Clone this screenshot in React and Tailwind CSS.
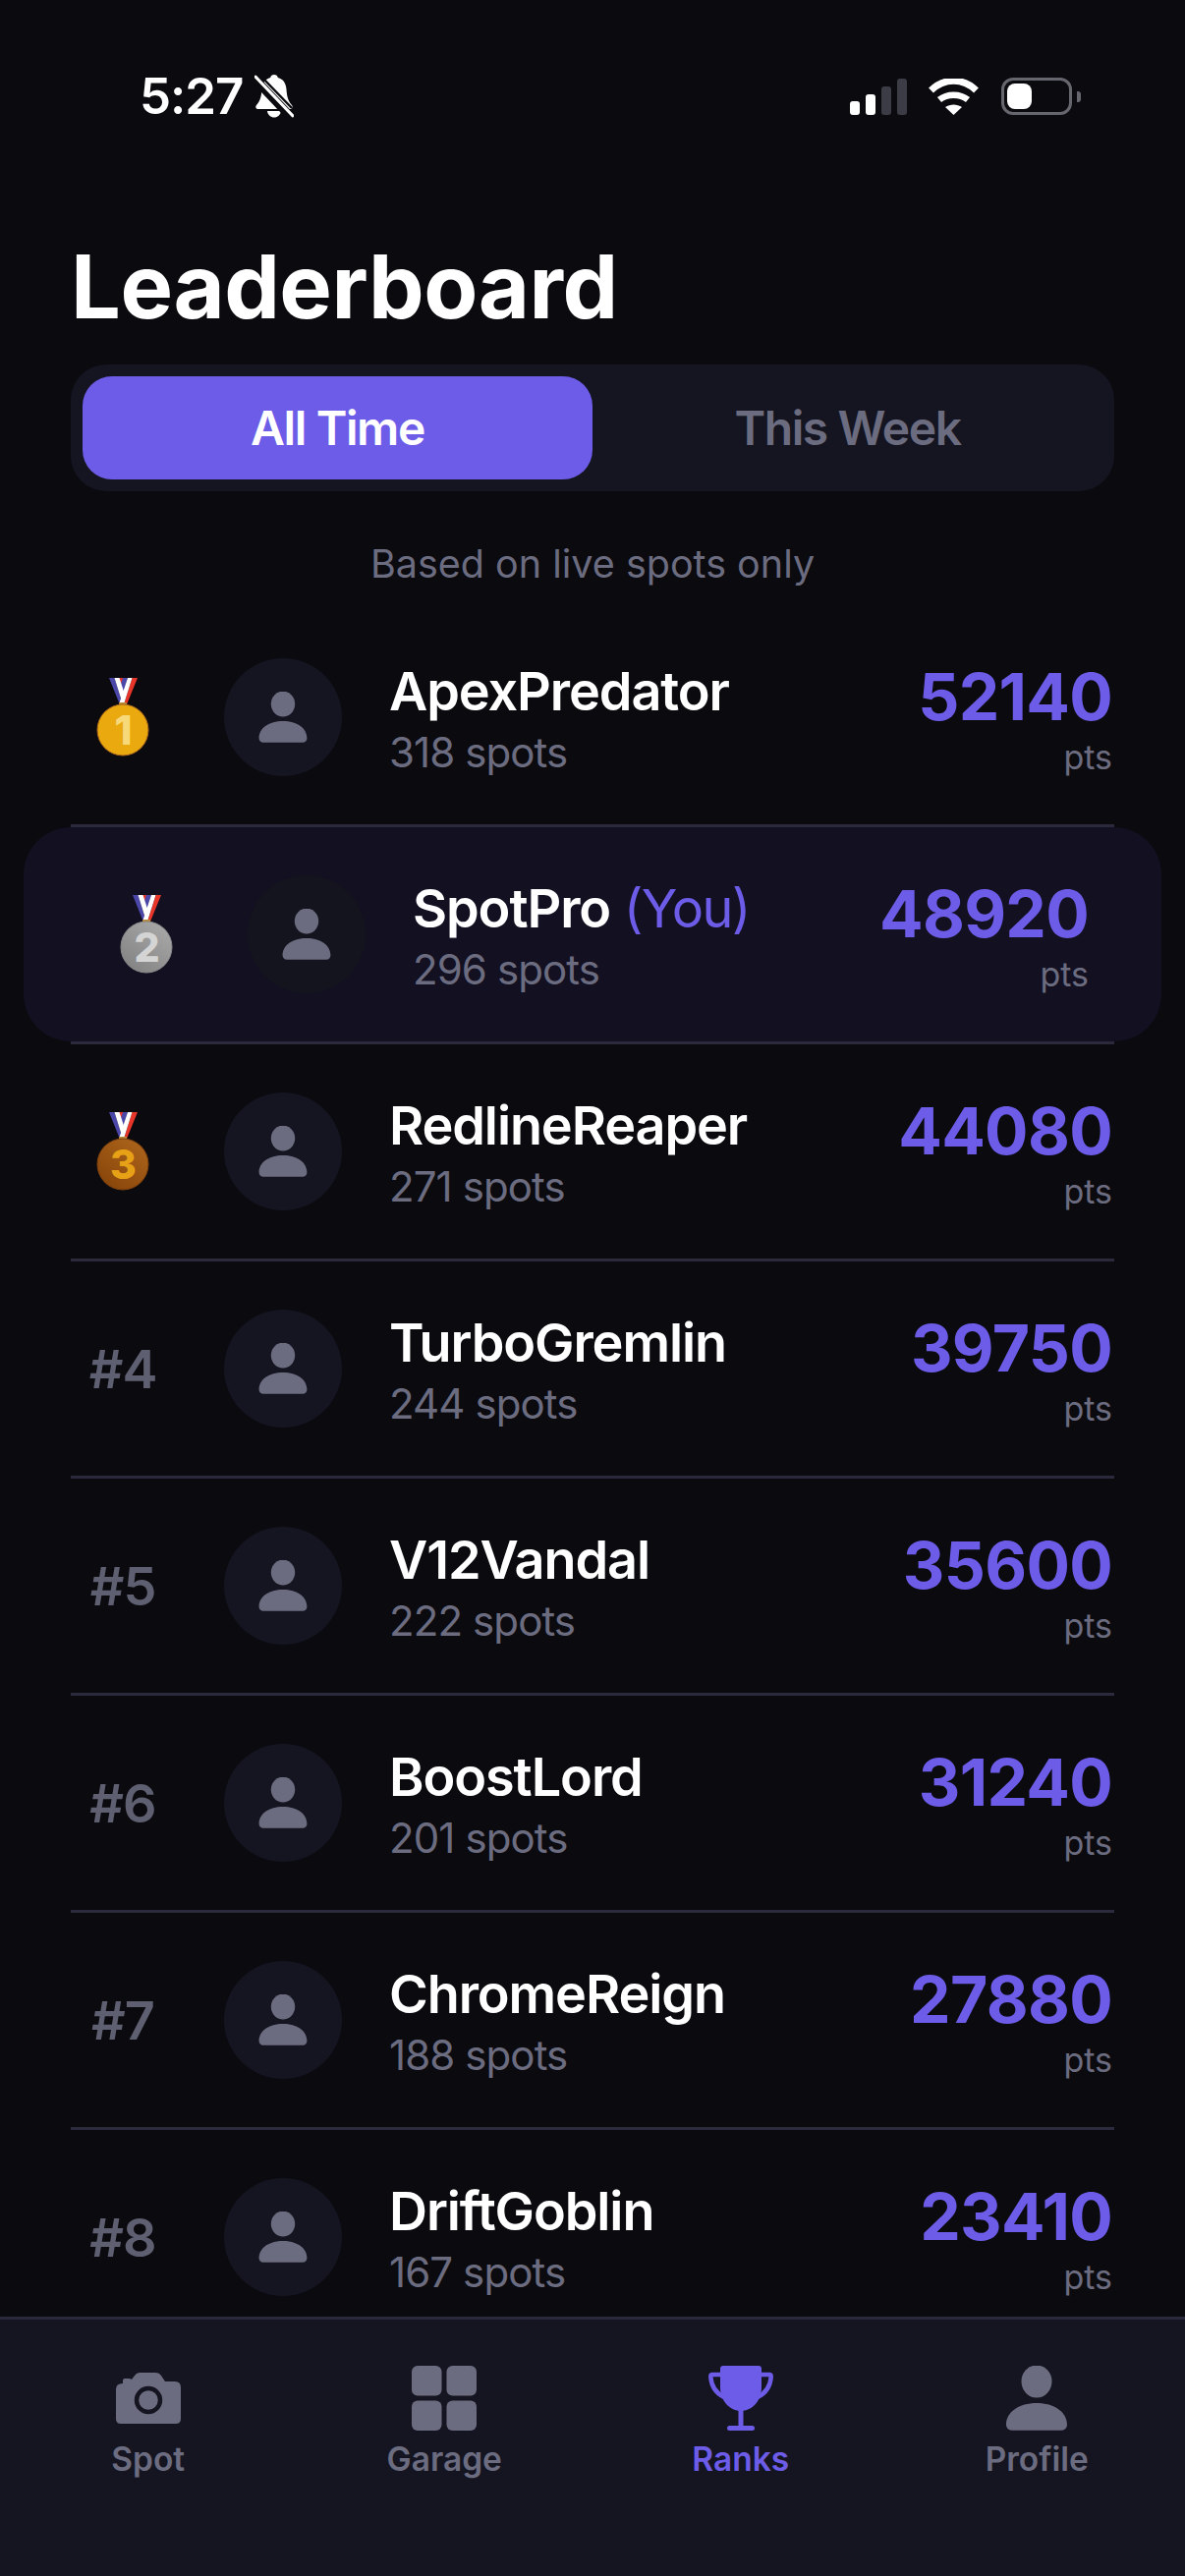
import React from 'react';

const players = [
  { rank: 1, name: 'ApexPredator', spots: 318, points: 52140 },
  { rank: 2, name: 'SpotPro', spots: 296, points: 48920, you: true },
  { rank: 3, name: 'RedlineReaper', spots: 271, points: 44080 },
  { rank: 4, name: 'TurboGremlin', spots: 244, points: 39750 },
  { rank: 5, name: 'V12Vandal', spots: 222, points: 35600 },
  { rank: 6, name: 'BoostLord', spots: 201, points: 31240 },
  { rank: 7, name: 'ChromeReign', spots: 188, points: 27880 },
  { rank: 8, name: 'DriftGoblin', spots: 167, points: 23410 },
];

const medalColors = {
  1: { from: '#e9a90f', to: '#e9a90f', edge: '#a8641a', digit: '#f8d97a' },
  2: { from: '#a6a6a6', to: '#858585', edge: '#8a8a8a', digit: '#d4d4d4' },
  3: { from: '#a9621a', to: '#8a470b', edge: '#7c3f0c', digit: '#e6a117' },
};

const Medal = ({ rank }) => {
  const c = medalColors[rank];
  return (
    <svg width="60" height="80" viewBox="0 0 60 80">
      <defs>
        <linearGradient id={`medal-${rank}`} x1="0.8" y1="0.1" x2="0.2" y2="0.9">
          <stop offset="0" stopColor={c.from} />
          <stop offset="1" stopColor={c.to} />
        </linearGradient>
      </defs>
      <polygon points="26,0 35,0 30,18" fill="#4a47a8" />
      <polygon points="26,0 30,0 28,6" fill="#e8352a" />
      <polygon points="16,0 21.500,0 29,24 26,25" fill="#4a47a8" />
      <polygon points="21.500,0 26.500,0 33,20 29,24" fill="#ffffff" />
      <polygon points="39.500,0 45,0 34,27 31,27" fill="#e8352a" />
      <polygon points="35,0 39.500,0 31,27 26,27" fill="#ffffff" />
      <rect x="26" y="25" width="8" height="4" fill="#b98a3a" />
      <circle cx="30" cy="53" r="26" fill={`url(#medal-${rank})`} stroke={c.edge} strokeWidth="1" />
      <text x="30" y="67.500" textAnchor="middle" fontSize="41" fontWeight="800" fontFamily="Inter, sans-serif" fill={c.digit}>
        {rank}
      </text>
    </svg>
  );
};

const PersonIcon = ({ size, color }) => (
  <svg width={size} height={size} viewBox="0 0 66 66" fill={color}>
    <ellipse cx="33" cy="16" rx="15.5" ry="16.5" />
    <path d="M2 60C2 47 15 38 33 38C51 38 64 47 64 60A5.5 5.5 0 0 1 58.5 65.7H7.5A5.5 5.5 0 0 1 2 60Z" />
  </svg>
);

const CameraIcon = () => (
  <svg width="66" height="66" viewBox="0 0 66 66">
    <path
      d="M7 18V15Q7 13 9 13H13Q15 13 16 14L19 10Q21 7 24 7H40Q44 7 46 10L50 16H60Q66 16 66 22V54Q66 59 61 59H5Q0 59 0 54V24Q0 18 7 18Z"
      fill="#6c6c80"
    />
    <circle cx="33" cy="35" r="12" fill="none" stroke="#141520" strokeWidth="4.5" />
  </svg>
);

const GarageIcon = () => (
  <svg width="66" height="66" viewBox="0 0 66 66" fill="#6c6c80">
    <rect x="0" y="0" width="30.5" height="30.5" rx="6" />
    <rect x="35.5" y="0" width="30.5" height="30.5" rx="6" />
    <rect x="0" y="35.5" width="30.5" height="30.5" rx="6" />
    <rect x="35.5" y="35.5" width="30.5" height="30.5" rx="6" />
  </svg>
);

const TrophyIcon = () => (
  <svg width="66" height="66" viewBox="0 0 66 66" fill="#6c5ce7">
    <path d="M15 0H51A3 3 0 0 1 54 3V22C54 36 44 46 33 46C22 46 12 36 12 22V3A3 3 0 0 1 15 0Z" />
    <path d="M13 9H3.500C2.500 9 2.200 10 2.300 11.500C3 21 8 28 16 32M53 9H62.500C63.500 9 63.800 10 63.700 11.500C63 21 58 28 50 32" fill="none" stroke="#6c5ce7" strokeWidth="4.500" />
    <rect x="30.500" y="44" width="5" height="19" />
    <rect x="19" y="61" width="28" height="5" rx="2.500" />
  </svg>
);

const BellSlash = () => (
  <svg width="40" height="44" viewBox="0 0 40 44">
    <path d="M20 0C22 0 23.500 1.300 23.800 3C29.500 4.500 32 9 32.500 15C33 23 34.500 27 38 31C39.500 33 38.500 35 36 35H4C1.500 35 0.500 33 2 31C5.500 27 7 23 7.500 15C8 9 10.500 4.500 16.200 3C16.500 1.300 18 0 20 0Z" fill="#fff" />
    <path d="M13 37H27C26.500 41 23.500 43.500 20 43.500C16.500 43.500 13.500 41 13 37Z" fill="#fff" />
    <path d="M-1 3L37 43" stroke="#0a0a0f" strokeWidth="9" />
    <path d="M1 2L39 42" stroke="#fff" strokeWidth="3" strokeLinecap="round" />
    <path d="M7 2L38 34" stroke="#0a0a0f" strokeWidth="2.500" />
  </svg>
);

const StatusIcons = () => (
  <div className="flex items-center">
    <div className="flex items-end gap-[6px] h-[37px]">
      <div className="w-[10px] h-[14px] rounded-[3px] bg-white" />
      <div className="w-[10px] h-[21px] rounded-[3px] bg-white" />
      <div className="w-[10px] h-[29px] rounded-[3px] bg-[#3c3c46]" />
      <div className="w-[10px] h-[37px] rounded-[3px] bg-[#3c3c46]" />
    </div>
    <svg className="ml-[22px]" width="51" height="37" viewBox="0 0 51 37" fill="none" stroke="#fff">
      <path d="M2.500 12C16 -1 35 -1 48.500 12" strokeWidth="7" />
      <path d="M11 21.500C19 15 32 15 40 21.500" strokeWidth="6.500" />
      <path d="M25.500 37L17 29C22 25.500 29 25.500 34 29Z" fill="#fff" stroke="none" />
    </svg>
    <div className="ml-[23px] flex items-center">
      <div className="w-[72px] h-[38px] rounded-[12px] border-[3px] border-[#66666e] p-[3px]">
        <div className="w-[25px] h-full rounded-[8px] bg-white" />
      </div>
      <div className="ml-[5px] w-[4px] h-[11px] rounded-r-[3px] bg-[#66666e]" />
    </div>
  </div>
);

const Row = ({ player }) => (
  <div className="border-b-[3px] border-[#2a2a3c] h-[221px] flex-none">
    <div className={player.you ? '-mx-[48px] px-[72px] h-full flex items-center rounded-[48px] bg-[#121021]' : 'h-full flex items-center'}>
      <div className="w-[106px] flex-none flex justify-center text-[54px] font-semibold tracking-[-1px] text-[#5f5f72]">
        {player.rank <= 3 ? <Medal rank={player.rank} /> : `#${player.rank}`}
      </div>
      <div className={`ml-[50px] w-[120px] h-[120px] flex-none rounded-full flex items-center justify-center ${player.you ? 'bg-[#14141e]' : 'bg-[#141520]'}`}>
        <PersonIcon size={52} color="#6c6c80" />
      </div>
      <div className="ml-[48px] flex-1 min-w-0 pt-[5px]">
        <div className="text-[54px] leading-[66px] font-semibold tracking-[-1.1px] text-white">
          {player.name}
          {player.you && <span className="font-normal tracking-[-1.6px] text-[#6c5ce7]"> (You)</span>}
        </div>
        <div className="mt-[1px] text-[42px] leading-[56px] tracking-[-0.9px] text-[#6c6c80]">{player.spots} spots</div>
      </div>
      <div className="flex flex-col items-end mr-[2px]">
        <div className="text-[66px] leading-[78px] font-bold tracking-[-0.7px] text-[#6c5ce7]">{player.points}</div>
        <div className="mt-[3px] text-[34px] leading-[40px] text-[#6c6c80]">pts</div>
      </div>
    </div>
  </div>
);

const tabs = [
  { label: 'Spot', icon: <CameraIcon /> },
  { label: 'Garage', icon: <GarageIcon /> },
  { label: 'Ranks', icon: <TrophyIcon />, active: true },
  { label: 'Profile', icon: <PersonIcon size={66} color="#6c6c80" /> },
];

export default function App() {
  return (
    <div className="w-[1206px] h-[2622px] bg-[#0a0a0f] flex flex-col overflow-hidden font-['Inter',sans-serif]">
      <div className="flex items-center justify-between pl-[142px] pr-[106px] pt-[68px] h-[128px] flex-none">
        <div className="flex items-center gap-[11px]">
          <span className="text-[51px] leading-[54px] font-semibold tracking-[-1px] text-white">5:27</span>
          <BellSlash />
        </div>
        <StatusIcons />
      </div>

      <div className="px-[72px] flex-none">
        <h1 className="mt-[112px] text-[90px] leading-[104px] font-bold tracking-[-0.5px] text-white">Leaderboard</h1>
        <div className="mt-[27px] h-[129px] rounded-[36px] bg-[#141520] p-[12px] flex">
          <div className="flex-1 rounded-[30px] bg-[#6c5ce7] flex items-center justify-center text-[48px] font-semibold tracking-[-1.4px] text-white">All Time</div>
          <div className="flex-1 flex items-center justify-center text-[48px] font-semibold tracking-[-1.4px] text-[#6c6c80]">This Week</div>
        </div>
        <p className="mt-[47px] text-center text-[39.5px] leading-[54px] text-[#6c6c80]">Based on live spots only</p>
      </div>

      <div className="flex-1 min-h-0 overflow-hidden px-[72px] mt-[20px] flex flex-col">
        {players.map((p) => (
          <Row key={p.rank} player={p} />
        ))}
      </div>

      <nav className="h-[264px] flex-none border-t-[3px] border-[#2a2a3c] bg-[#141520] flex pt-[47px] items-start">
        {tabs.map((t) => (
          <div key={t.label} className="flex-1 flex flex-col items-center">
            {t.icon}
            <span className={`mt-[7px] text-[33.5px] leading-[44px] font-semibold ${t.active ? 'text-[#6c5ce7]' : 'text-[#6c6c80]'}`}>{t.label}</span>
          </div>
        ))}
      </nav>
    </div>
  );
}
